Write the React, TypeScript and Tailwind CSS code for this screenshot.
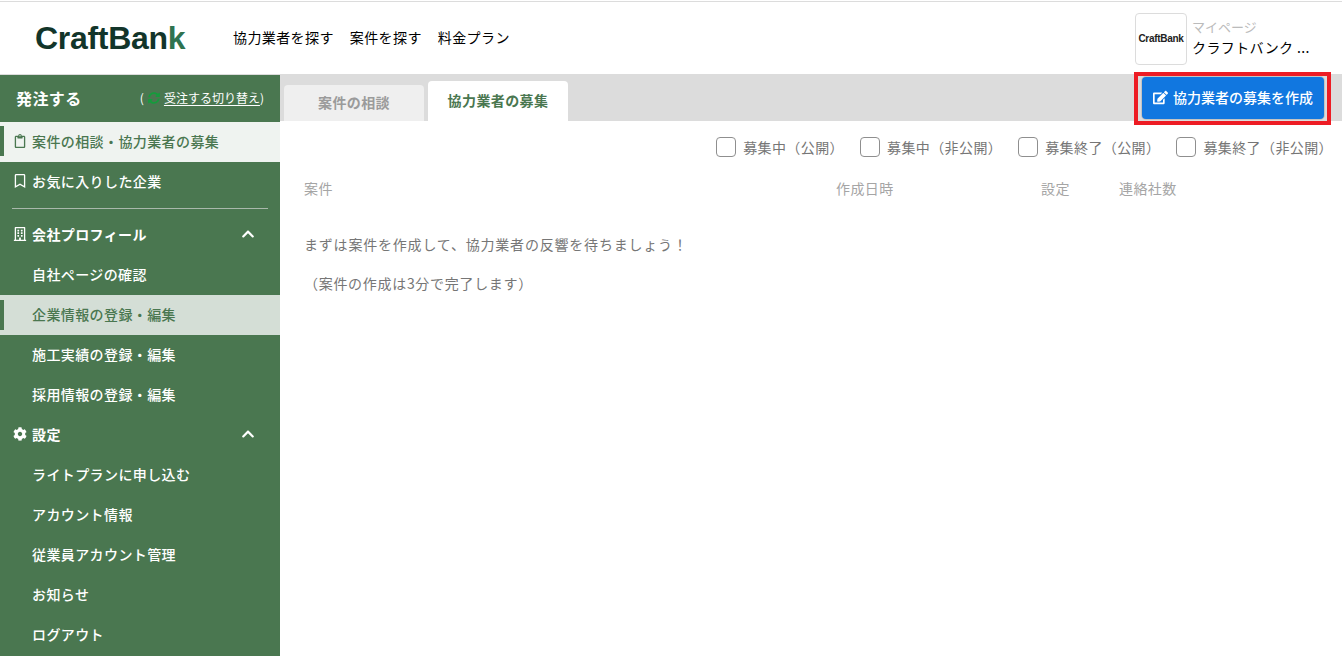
import { FaChevronUp, FaCog, FaEdit, FaRegBookmark, FaRegBuilding, FaRegClipboard, FaSyncAlt } from 'react-icons/fa';

const profileLinks = ['自社ページの確認', '企業情報の登録・編集', '施工実績の登録・編集', '採用情報の登録・編集'];
const settingLinks = ['ライトプランに申し込む', 'アカウント情報', '従業員アカウント管理', 'お知らせ', 'ログアウト'];
const filters = ['募集中（公開）', '募集中（非公開）', '募集終了（公開）', '募集終了（非公開）'];

function SubLink({ label, active }: { label: string; active?: boolean }) {
  return (
    <a className={`relative flex h-10 items-center pb-0.5 pl-8 font-medium ${active ? 'bg-[#d4ded6] text-[#4a7750]' : 'text-white'}`}>
      {active && <span className="absolute top-[5px] left-0 h-[30px] w-1 bg-[#4a7750]" />}
      {label}
    </a>
  );
}

function SectionHead({ icon, label }: { icon: React.ReactNode; label: string }) {
  return (
    <div className="flex h-10 items-center pb-0.5 pl-[13px] pr-[25px] font-bold text-white">
      <span className="flex w-[19px] shrink-0">{icon}</span>
      <span className="flex-1">{label}</span>
      <FaChevronUp size={14} />
    </div>
  );
}

export default function App() {
  return (
    <div className="h-[656px] w-[1342px] overflow-hidden bg-white font-['Noto_Sans_CJK_JP',sans-serif] text-sm tracking-[0.4px]">
      <header className="mt-px flex h-[74px] items-center border-y border-[#dcdcdc] pl-[35px] pr-[33px]">
        <span className="w-[198px] font-['Liberation_Sans',sans-serif] text-[32px] leading-none font-bold tracking-[-0.3px] text-[#12352a]">
          CraftBan<span className="text-[#2f7350]">k</span>
        </span>
        <nav className="mb-[3px] flex gap-4 text-black">
          <a>協力業者を探す</a>
          <a>案件を探す</a>
          <a>料金プラン</a>
        </nav>
        <div className="mt-0.5 ml-auto flex w-[174px] items-center gap-[5px]">
          <div className="flex h-[52px] w-[52px] items-center justify-center rounded border border-[#dcdcdc] font-['Liberation_Sans',sans-serif] text-[10px] font-bold tracking-[-0.3px] text-[#222]">
            CraftBank
          </div>
          <div className="min-w-0 flex-1 pb-1 leading-[21px]">
            <div className="text-[13px] tracking-normal text-[#bbb]">マイページ</div>
            <div className="whitespace-nowrap text-black">クラフトバンク ...</div>
          </div>
        </div>
      </header>

      <div className="flex h-[581px]">
        <aside className="h-full w-[280px] shrink-0 bg-[#4a7750]">
          <div className="flex h-[47px] items-center justify-between pb-0.5 pl-4 pr-[16px] text-white">
            <span className="text-base font-bold">発注する</span>
            <span className="flex items-center text-xs tracking-normal">
              (
              <FaSyncAlt size={12} className="mx-1 text-[#149c3c]" />
              <a className="underline underline-offset-2">受注する切り替え</a>)
            </span>
          </div>
          <a className="relative flex h-10 items-center bg-[#eff3f0] pb-0.5 pl-[13px] font-medium text-[#4a7750]">
            <span className="absolute top-1 left-0 h-[30px] w-1 bg-[#4a7750]" />
            <span className="flex w-[19px] shrink-0">
              <FaRegClipboard size={14} />
            </span>
            案件の相談・協力業者の募集
          </a>
          <a className="flex h-10 items-center pb-0.5 pl-[13px] font-medium text-white">
            <span className="flex w-[19px] shrink-0">
              <FaRegBookmark size={14} />
            </span>
            お気に入りした企業
          </a>
          <div className="mx-3 mt-[6px] mb-[6px] border-t border-[#a9b8ab]" />
          <SectionHead icon={<FaRegBuilding size={14} />} label="会社プロフィール" />
          {profileLinks.map((l) => (
            <SubLink key={l} label={l} active={l === '企業情報の登録・編集'} />
          ))}
          <SectionHead icon={<FaCog size={14} />} label="設定" />
          {settingLinks.map((l) => (
            <SubLink key={l} label={l} />
          ))}
        </aside>

        <main className="min-w-0 flex-1">
          <div className="flex h-[46px] items-end justify-between bg-[#dcdcdc] pl-1 pr-[18px]">
            <div className="flex items-end gap-1 font-bold">
              <div className="flex h-9 w-[140px] items-center justify-center rounded-t bg-[#efefef] pb-0.5 text-[#9b9b9b]">案件の相談</div>
              <div className="flex h-10 w-[140px] items-center justify-center rounded-t bg-white pb-0.5 text-[#4a7750]">協力業者の募集</div>
            </div>
            <div className="relative mb-0.5">
              <button className="flex h-[42px] w-[182px] items-center justify-center gap-[5px] rounded-sm bg-[#1177e0] pb-0.5 font-medium tracking-normal text-white ring-1 ring-[#c4c4c4]">
                <FaEdit size={15} />
                協力業者の募集を作成
              </button>
              {/* red annotation frame from the screenshot */}
              <span className="pointer-events-none absolute -top-[5px] -right-[7px] -bottom-[6px] -left-[8px] border-4 border-[#ed1c24]" />
            </div>
          </div>

          <div className="mt-[3px] flex justify-end gap-4 pr-[9px] pt-[13px] text-[#767676]">
            {filters.map((f) => (
              <label key={f} className="flex h-5 items-center gap-[7px]">
                <span className="h-5 w-5 rounded-sm border border-[#8f8f8f] bg-white" />
                {f}
              </label>
            ))}
          </div>

          <div className="mt-[21px] flex h-5 items-center pl-6 text-[#a5a5a5]">
            <span className="w-[532px]">案件</span>
            <span className="w-[205px]">作成日時</span>
            <span className="w-[78px]">設定</span>
            <span>連絡社数</span>
          </div>

          <p className="mt-[36px] pl-6 leading-5 tracking-[0.8px] text-[#767676]">まずは案件を作成して、協力業者の反響を待ちましょう！</p>
          <p className="mt-[19px] pl-6 leading-5 tracking-[0.7px] text-[#767676]">（案件の作成は3分で完了します）</p>
        </main>
      </div>
    </div>
  );
}
